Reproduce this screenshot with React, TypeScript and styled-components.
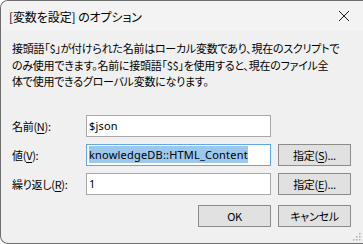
import React from 'react'
import styled, { createGlobalStyle } from 'styled-components'

const GlobalStyle = createGlobalStyle`
	html, body {
		margin: 0;
		padding: 0;
		background: #ffffff;
	}
	#root {
		height: 100vh;
	}
`

const Window = styled.div`
	box-sizing: border-box;
	height: 100vh;
	width: 100%;
	display: flex;
	flex-direction: column;
	background: #f0f0f0;
	border: 1px solid #6e6e6e;
	border-right: none;
	border-radius: 8px 0 0 8px;
	overflow: hidden;
	position: relative;
	font-family: 'Noto Sans CJK JP', 'Noto Sans', sans-serif;
	color: #000;
`

const TitleBar = styled.div`
	height: 30px;
	flex: none;
	display: flex;
	align-items: center;
	justify-content: space-between;
	padding: 0 9px 0 8px;
	background: #f3f3f3;
`

const Title = styled.span`
	font-size: 12px;
	font-feature-settings: 'palt';
	letter-spacing: -0.1px;
`

const CloseButton = styled.span`
	display: flex;
	align-items: center;
	justify-content: center;
	width: 24px;
	height: 24px;
	margin-right: -2px;
`

const Body = styled.div`
	flex: 1;
	display: flex;
	flex-direction: column;
	padding: 9px 11px 0 11px;
`

const Description = styled.p`
	margin: 0;
	font-size: 11px;
	line-height: 16.5px;
	white-space: nowrap;
	font-feature-settings: 'palt';
	letter-spacing: -0.25px;
`

const FormGrid = styled.div`
	display: grid;
	grid-template-columns: 67px 185px 73px;
	grid-auto-rows: 22px;
	column-gap: 7px;
	row-gap: 7px;
	margin-top: 25px;
	align-items: center;
`

const Label = styled.span`
	font-size: 11px;
	font-feature-settings: 'palt';
	letter-spacing: -0.3px;
	white-space: nowrap;

	u {
		text-underline-offset: 2px;
	}
`

const Field = styled.div<{ $focused?: boolean }>`
	box-sizing: border-box;
	height: 22px;
	display: flex;
	align-items: center;
	padding: 0 2px;
	background: #ffffff;
	border: 1px solid ${(p) => (p.$focused ? '#5fa7e6' : '#a8a8a8')};
	font-family: 'Noto Sans', sans-serif;
	font-size: 11px;
	letter-spacing: 0.2px;
	white-space: nowrap;
	overflow: hidden;
`

const Selected = styled.span`
	background: #9cc8ee;
	padding: 1px 0;
`

const Button = styled.button`
	box-sizing: border-box;
	height: 22px;
	width: 73px;
	padding: 0;
	background: #e1e1e1;
	border: 1px solid #8c8c8c;
	font-family: 'Noto Sans CJK JP', 'Noto Sans', sans-serif;
	font-size: 11px;
	font-feature-settings: 'palt';
	letter-spacing: -0.3px;
	color: #000;

	u {
		text-underline-offset: 2px;
	}
`

const Footer = styled.div`
	display: flex;
	justify-content: flex-end;
	gap: 7px;
	margin-top: 10px;
	width: 339px;
`

const Grip = styled.svg`
	position: absolute;
	right: 2px;
	bottom: 2px;
`

const Mn: React.FC<{ children: React.ReactNode }> = ({ children }) => <u>{children}</u>

export default function App() {
	return (
		<>
			<GlobalStyle />
			<Window>
				<TitleBar>
					<Title>[変数を設定] のオプション</Title>
					<CloseButton>
						<svg width="12" height="12" viewBox="0 0 12 12">
							<path d="M1 1 L11 11 M11 1 L1 11" stroke="#1a1a1a" strokeWidth="1" />
						</svg>
					</CloseButton>
				</TitleBar>
				<Body>
					<Description>
						接頭語「$」が付けられた名前はローカル変数であり、現在のスクリプトで
						<br />
						のみ使用できます。名前に接頭語「$$」を使用すると、現在のファイル全
						<br />
						体で使用できるグローバル変数になります。
					</Description>
					<FormGrid>
						<Label>
							名前(<Mn>N</Mn>):
						</Label>
						<Field>$json</Field>
						<span />

						<Label>
							値(<Mn>V</Mn>):
						</Label>
						<Field $focused>
							<Selected>knowledgeDB::HTML_Content</Selected>
						</Field>
						<Button>
							指定(<Mn>S</Mn>)...
						</Button>

						<Label>
							繰り返し(<Mn>R</Mn>):
						</Label>
						<Field>1</Field>
						<Button>
							指定(<Mn>E</Mn>)...
						</Button>
					</FormGrid>
					<Footer>
						<Button>OK</Button>
						<Button>キャンセル</Button>
					</Footer>
				</Body>
				<Grip width="10" height="10" viewBox="0 0 10 10">
					{[
						[8, 2],
						[8, 5],
						[5, 5],
						[8, 8],
						[5, 8],
						[2, 8],
					].map(([x, y]) => (
						<rect key={`${x}-${y}`} x={x} y={y} width="1.5" height="1.5" fill="#b0b0b0" />
					))}
				</Grip>
			</Window>
		</>
	)
}
